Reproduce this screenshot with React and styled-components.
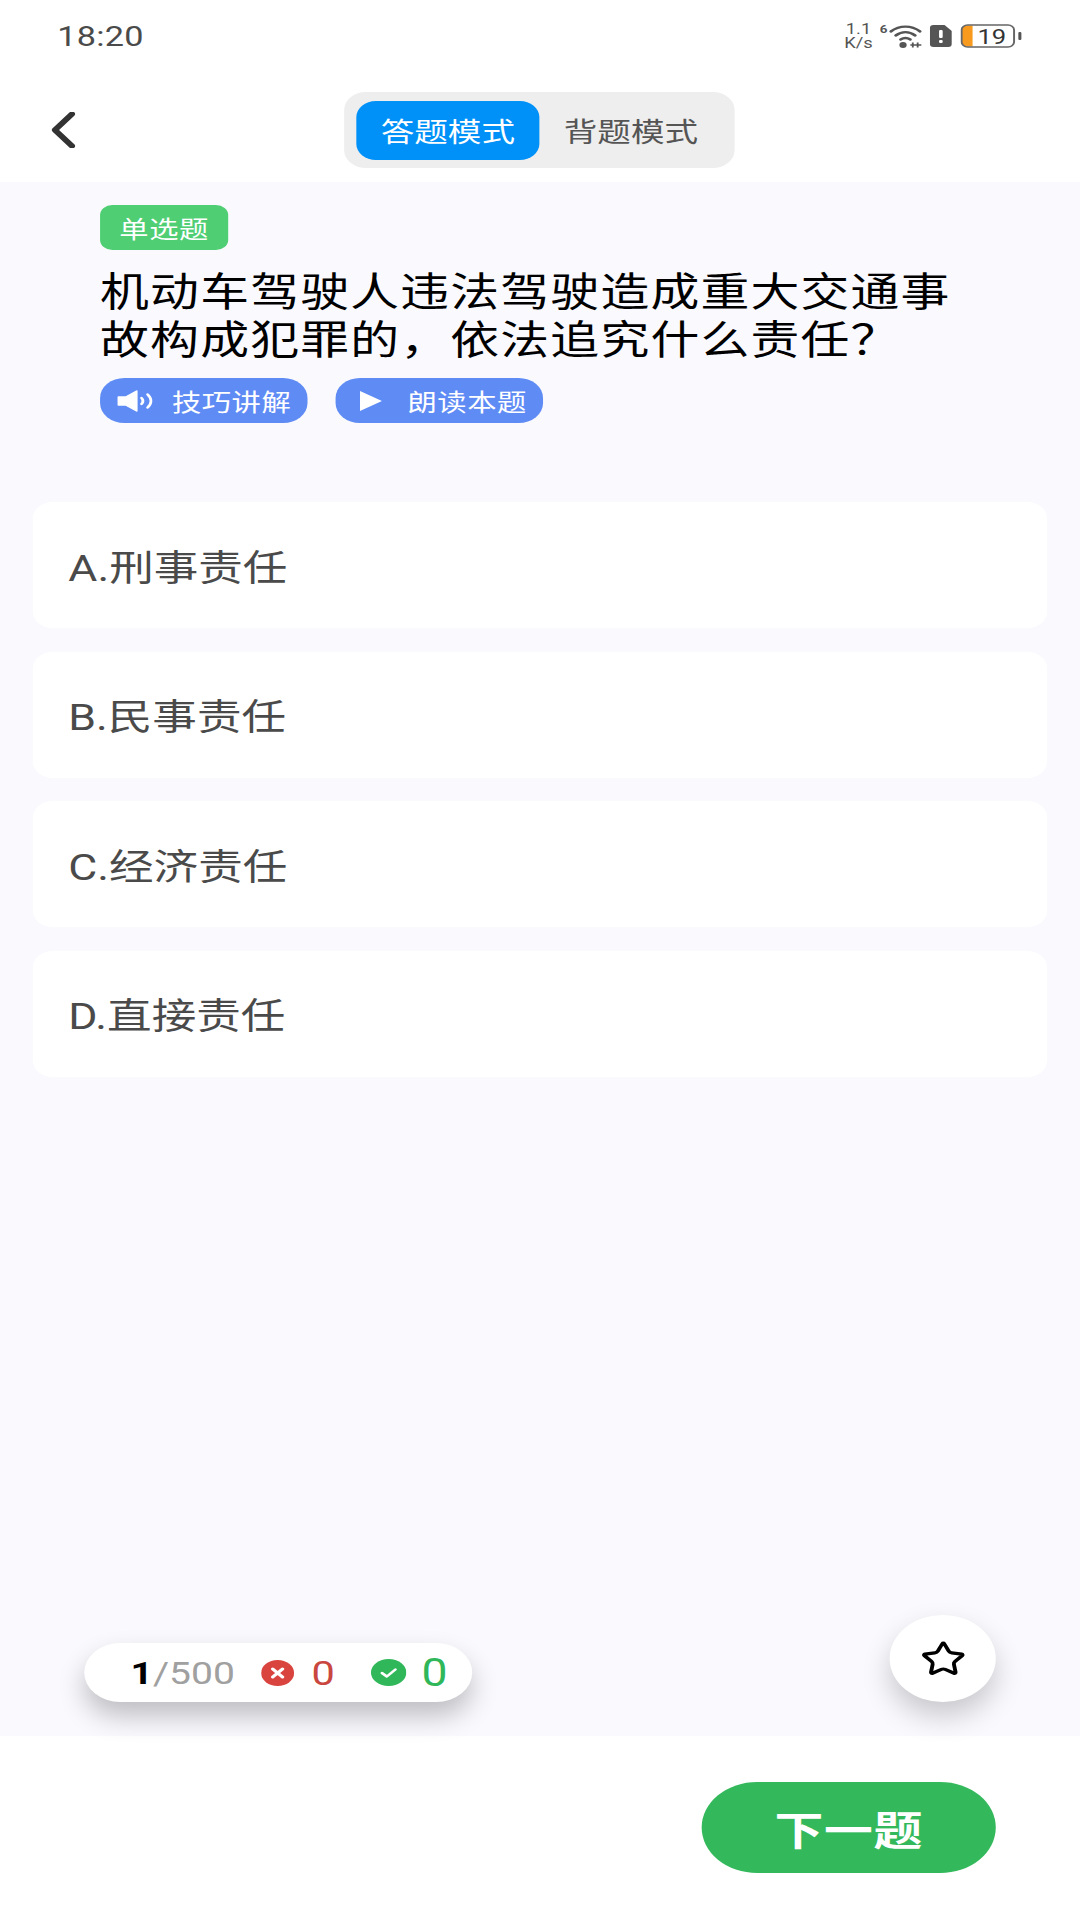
import React from 'react';
import styled, { createGlobalStyle } from 'styled-components';
import { Star } from 'lucide-react';

const GlobalStyle = createGlobalStyle`
  html, body {
    margin: 0;
    padding: 0;
    background: #ffffff;
    overflow: hidden;
  }
  * {
    box-sizing: border-box;
  }
`;

const Page = styled.div`
  width: 885px;
  height: 1920px;
  display: flex;
  flex-direction: column;
  background: #ffffff;
  font-family: Roboto, "Noto Sans CJK SC", sans-serif;
  transform: scaleX(1.2203);
  transform-origin: left top;
`;

const StatusBar = styled.div`
  height: 70px;
  padding: 2px 47px 0 47px;
  display: flex;
  align-items: center;
  justify-content: space-between;
`;

const Time = styled.span`
  font-size: 28px;
  color: #4a4a4a;
  letter-spacing: 0.2px;
`;

const StatusIcons = styled.div`
  display: flex;
  align-items: center;
`;

const NetSpeed = styled.div`
  width: 31px;
  margin-right: 2px;
  font-size: 15px;
  line-height: 14px;
  color: #555555;
  text-align: center;
`;

const Header = styled.div`
  height: 112px;
  padding-top: 8px;
  display: grid;
  grid-template-columns: 282px auto 1fr;
  align-items: center;
`;

const BackButton = styled.div`
  padding-left: 42px;
  display: flex;
  align-items: center;
`;

const Tabs = styled.div`
  width: 320px;
  height: 76px;
  padding: 0 10px;
  display: flex;
  align-items: center;
  background: #eeeeee;
  border-radius: 18px;
`;

const Tab = styled.div`
  width: 150px;
  height: 59px;
  display: flex;
  align-items: center;
  justify-content: center;
  border-radius: 16px;
  font-size: 27.5px;
  color: ${p => (p.$active ? '#ffffff' : '#555555')};
  background: ${p => (p.$active ? '#0091f8' : 'transparent')};
`;

const Content = styled.div`
  position: relative;
  flex: 1;
  padding-top: 23px;
  background: #f9f9fe;
`;

const Question = styled.div`
  padding-left: 82px;
`;

const TypeTag = styled.div`
  width: 105px;
  height: 45px;
  display: flex;
  align-items: center;
  justify-content: center;
  border-radius: 10px;
  background: #4fce73;
  color: #ffffff;
  font-size: 24px;
  letter-spacing: 0.5px;
`;

const Title = styled.div`
  width: 710px;
  margin-top: 19px;
  font-size: 40px;
  line-height: 48px;
  letter-spacing: 1px;
  color: #000000;
`;

const ActionRow = styled.div`
  margin-top: 13px;
  display: flex;
  gap: 23px;
`;

const ActionButton = styled.div`
  width: 170px;
  height: 45px;
  padding-left: 14px;
  display: flex;
  align-items: center;
  border-radius: 20px;
  background: #5f8bf5;
  color: #ffffff;
  font-size: 24px;
  letter-spacing: 0.4px;
`;

const ActionIcon = styled.span`
  width: 45px;
  display: flex;
  align-items: center;
`;

const OptionList = styled.div`
  margin-top: 79px;
  padding: 0 27px;
  display: flex;
  flex-direction: column;
  gap: 23.5px;
`;

const OptionCard = styled.div`
  height: 126px;
  padding-left: 29px;
  display: flex;
  align-items: center;
  background: #ffffff;
  border-radius: 16px;
  font-size: 36.5px;
  color: #4a4a4a;
`;

const StatsPill = styled.div`
  position: absolute;
  left: 69px;
  bottom: 34px;
  width: 318px;
  height: 59px;
  padding-left: 38px;
  display: flex;
  align-items: center;
  border-radius: 30px;
  background: #ffffff;
  box-shadow: 0 14px 24px rgba(0, 0, 0, 0.24);
`;

const Current = styled.b`
  font-size: 32px;
  color: #000000;
`;

const Total = styled.span`
  width: 89px;
  font-size: 32px;
  color: #a0a0a0;
`;

const StatIcon = styled.span`
  display: flex;
  margin-left: ${p => p.$gap || 0}px;
`;

const Count = styled.span`
  width: ${p => p.$width}px;
  margin-left: ${p => p.$gap}px;
  font-size: ${p => p.$size}px;
  color: ${p => p.$color};
`;

const FavButton = styled.div`
  position: absolute;
  right: 69px;
  bottom: 34px;
  width: 87px;
  height: 87px;
  display: flex;
  align-items: center;
  justify-content: center;
  border-radius: 50%;
  background: #ffffff;
  box-shadow: 0 14px 26px rgba(0, 0, 0, 0.2);
`;

const BottomBar = styled.div`
  height: 184px;
  padding: 46px 69px 0 0;
  display: flex;
  justify-content: flex-end;
  align-items: flex-start;
  background: #ffffff;
`;

const NextButton = styled.div`
  width: 241px;
  height: 91px;
  display: flex;
  align-items: center;
  justify-content: center;
  border-radius: 46px;
  background: #33b95c;
  color: #ffffff;
  font-size: 40px;
  font-weight: 700;
  letter-spacing: 0.5px;
`;

const BatteryText = styled.text`
  font-family: Roboto, sans-serif;
  font-size: 21px;
  fill: #333333;
`;

const WifiIcon = () => (
  <svg width="38" height="26" viewBox="0 0 38 26" fill="none">
    <text x="0" y="10" fontSize="11" fontWeight="700" fill="#555555" fontFamily="Roboto, sans-serif">6</text>
    <path d="M9 8.5C16 2 26 2 33 8.5" stroke="#555555" strokeWidth="2.4" strokeLinecap="round" />
    <path d="M13 12.5C18 8 24 8 29 12.5" stroke="#555555" strokeWidth="2.4" strokeLinecap="round" />
    <path d="M17 16.5C19.5 14.5 22.5 14.5 25 16.5" stroke="#555555" strokeWidth="2.4" strokeLinecap="round" />
    <circle cx="19" cy="22" r="3" fill="#555555" />
    <path d="M25 22h9M27 19.5V24.5M31 19.5V24.5" stroke="#555555" strokeWidth="1.5" />
  </svg>
);

const SimAlertIcon = () => (
  <svg width="18" height="22" viewBox="0 0 18 22" style={{ marginLeft: 3 }}>
    <path d="M3 0H12L18 6V19a3 3 0 0 1-3 3H3a3 3 0 0 1-3-3V3a3 3 0 0 1 3-3Z" fill="#555555" />
    <rect x="7.5" y="5" width="3" height="8" rx="1" fill="#ffffff" />
    <rect x="7.5" y="15" width="3" height="3" rx="1" fill="#ffffff" />
  </svg>
);

const BatteryIcon = () => (
  <svg width="51" height="24" viewBox="0 0 51 24" style={{ marginLeft: 7 }}>
    <path d="M5 1.5H10V22.5H5a4 4 0 0 1-4-4V5.5a4 4 0 0 1 4-4Z" fill="#f79a1e" />
    <rect x="1" y="1" width="43" height="22" rx="5" fill="none" stroke="#666666" strokeWidth="1.6" />
    <rect x="47.5" y="8" width="2.5" height="8" rx="1" fill="#555555" />
    <BatteryText x="14" y="19.5">19</BatteryText>
  </svg>
);

const SpeakerIcon = () => (
  <svg width="30" height="22" viewBox="0 0 30 22" fill="none">
    <path d="M1 7H7L16 1V21L7 15H1Z" fill="#ffffff" stroke="#ffffff" strokeWidth="1.5" strokeLinejoin="round" />
    <path d="M20 8C21.5 9.5 21.5 12.5 20 14" stroke="#ffffff" strokeWidth="2.4" strokeLinecap="round" />
    <path d="M25 4.5C28.5 8.5 28.5 13.5 25 17.5" stroke="#ffffff" strokeWidth="2.4" strokeLinecap="round" />
  </svg>
);

const PlayIcon = () => (
  <svg width="18" height="20" viewBox="0 0 18 20" style={{ marginLeft: 6 }}>
    <path d="M0 0L18 10L0 20Z" fill="#ffffff" />
  </svg>
);

const WrongIcon = () => (
  <svg width="27" height="26" viewBox="0 0 27 26">
    <ellipse cx="13.5" cy="13" rx="13.5" ry="13" fill="#d9443f" />
    <path d="M9.5 9L17.5 17M17.5 9L9.5 17" stroke="#ffffff" strokeWidth="3" strokeLinecap="round" />
  </svg>
);

const RightIcon = () => (
  <svg width="29" height="27" viewBox="0 0 29 27">
    <ellipse cx="14.5" cy="13.5" rx="14.5" ry="13.5" fill="#2fb75a" />
    <path d="M9 14L13 17.5L20 10.5" stroke="#ffffff" strokeWidth="2.4" fill="none" strokeLinecap="round" strokeLinejoin="round" />
  </svg>
);

const options = ['A.刑事责任', 'B.民事责任', 'C.经济责任', 'D.直接责任'];

export default function App() {
  return (
    <Page>
      <GlobalStyle />
      <StatusBar>
        <Time>18:20</Time>
        <StatusIcons>
          <NetSpeed>1.1<br />K/s</NetSpeed>
          <WifiIcon />
          <SimAlertIcon />
          <BatteryIcon />
        </StatusIcons>
      </StatusBar>
      <Header>
        <BackButton>
          <svg width="20" height="36" viewBox="0 0 20 36" fill="none">
            <path d="M17 2L3 18L17 34" stroke="#333333" strokeWidth="5" strokeLinecap="round" strokeLinejoin="round" />
          </svg>
        </BackButton>
        <Tabs>
          <Tab $active>答题模式</Tab>
          <Tab>背题模式</Tab>
        </Tabs>
      </Header>
      <Content>
        <Question>
          <TypeTag>单选题</TypeTag>
          <Title>机动车驾驶人违法驾驶造成重大交通事故构成犯罪的，依法追究什么责任？</Title>
          <ActionRow>
            <ActionButton>
              <ActionIcon><SpeakerIcon /></ActionIcon>
              技巧讲解
            </ActionButton>
            <ActionButton>
              <ActionIcon><PlayIcon /></ActionIcon>
              朗读本题
            </ActionButton>
          </ActionRow>
        </Question>
        <OptionList>
          {options.map(option => (
            <OptionCard key={option}>{option}</OptionCard>
          ))}
        </OptionList>
        <StatsPill>
          <Current>1</Current>
          <Total>/500</Total>
          <StatIcon><WrongIcon /></StatIcon>
          <Count $width={20} $gap={14} $size={34} $color="#c9473f">0</Count>
          <StatIcon $gap={29}><RightIcon /></StatIcon>
          <Count $width={22} $gap={12} $size={38} $color="#2fb75a">0</Count>
        </StatsPill>
        <FavButton>
          <Star size={38} color="#000000" strokeWidth={2} />
        </FavButton>
      </Content>
      <BottomBar>
        <NextButton>下一题</NextButton>
      </BottomBar>
    </Page>
  );
}
